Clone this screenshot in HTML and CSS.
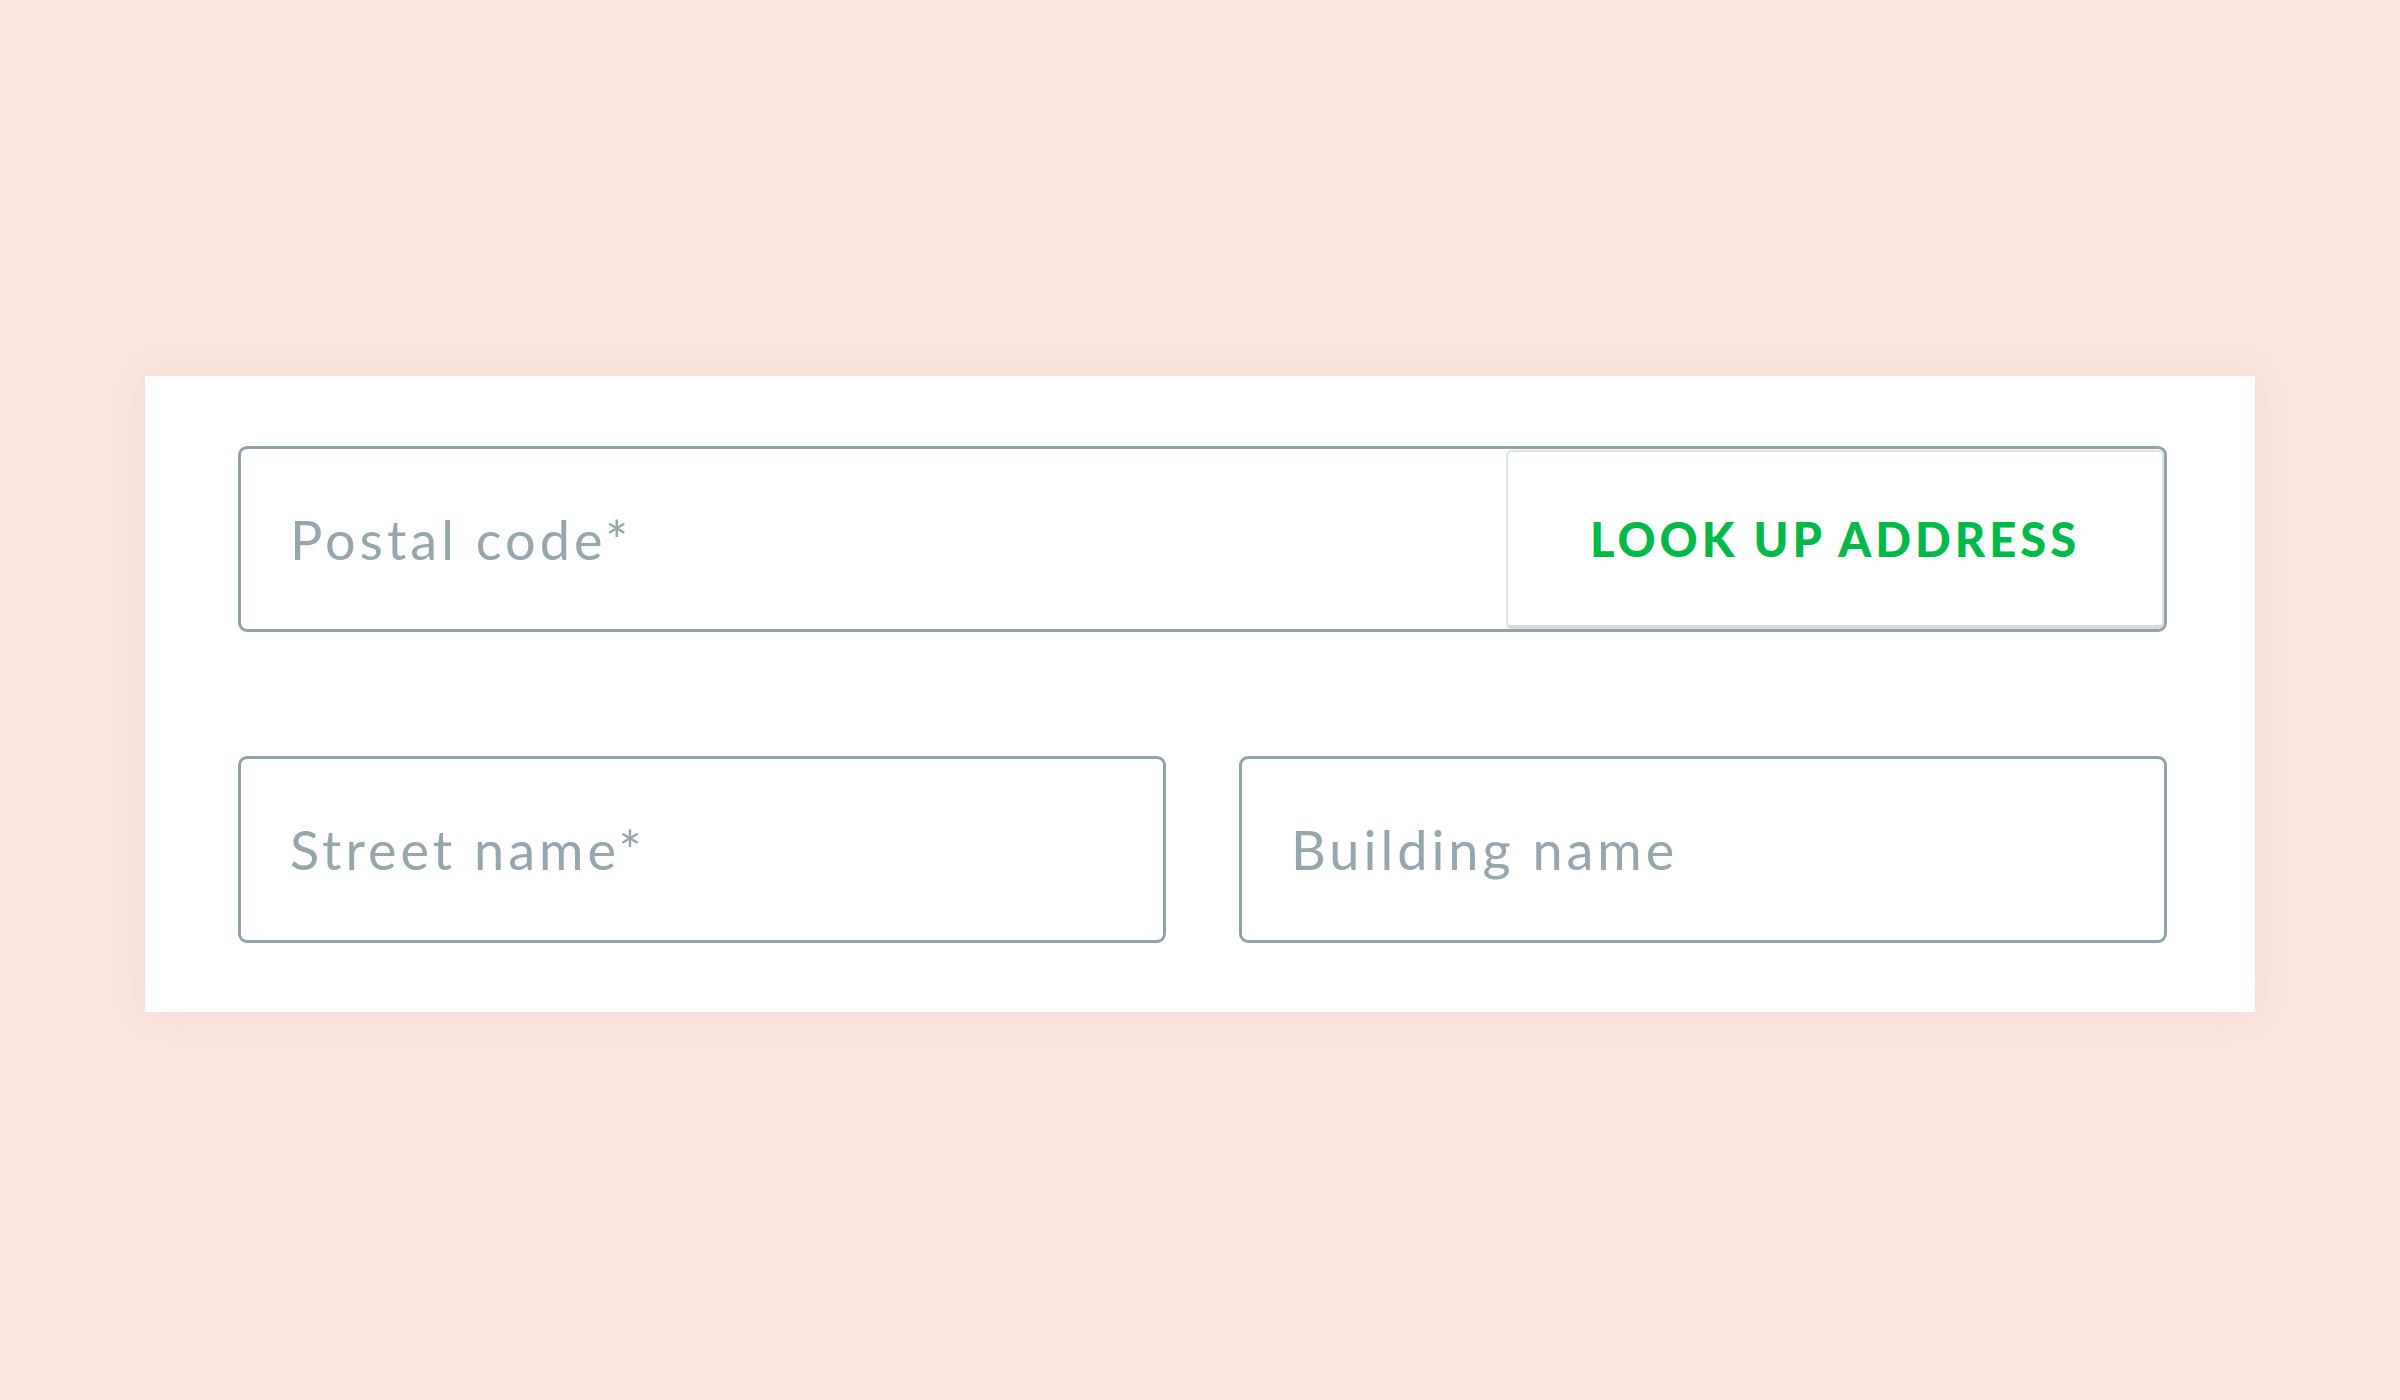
FILE: index.html
```html
<!DOCTYPE html>
<html lang="en">
<head>
<meta charset="utf-8">
<title>Address form</title>
<link rel="stylesheet" href="styles.css">
</head>
<body>
<main class="stage">
  <form class="card">
    <div class="field field-postal">
      <input class="field-input" type="text" placeholder="Postal code*">
      <button class="lookup" type="button">LOOK UP ADDRESS</button>
    </div>
    <div class="row">
      <div class="field"><input class="field-input" type="text" placeholder="Street name*"></div>
      <div class="field"><input class="field-input" type="text" placeholder="Building name"></div>
    </div>
  </form>
</main>
</body>
</html>
```

FILE: styles.css
```css
html, body {
  margin: 0;
  padding: 0;
  background: #fbe7e0;
}
body {
  width: 2400px;
  height: 1400px;
  font-family: "Lato", "Liberation Sans", sans-serif;
}
.stage {
  padding-top: 376px;
  display: flex;
  justify-content: center;
}
.card {
  width: 2110px;
  box-sizing: border-box;
  background: #ffffff;
  padding: 70px 88px 69px 93px;
  box-shadow: 0 0 40px 8px rgba(220, 170, 150, 0.18);
  display: flex;
  flex-direction: column;
  gap: 124px;
}
.row {
  display: flex;
  gap: 73px;
}
.row .field {
  flex: 1;
}
.field {
  height: 187px;
  box-sizing: border-box;
  border: 3px solid #91a2a9;
  border-radius: 9px;
  display: flex;
  align-items: stretch;
  background: #fff;
}
.field-postal {
  height: 186px;
}
.field-input {
  flex: 1;
  min-width: 0;
  border: none;
  outline: none;
  background: transparent;
  padding: 0 0 0 49px;
  font-family: "Lato", "Liberation Sans", sans-serif;
  font-size: 54px;
  letter-spacing: 4px;
  color: #4b5a60;
  border-radius: 9px;
}
.field-input::placeholder {
  color: #95a6ad;
  opacity: 1;
}
.lookup {
  width: 658px;
  margin: 1px 0 0 0;
  border: 2px solid #e1e3e3;
  border-bottom-width: 4px;
  border-bottom-color: #d6dadb;
  border-radius: 6px;
  background: #fff;
  color: #00b94a;
  font-family: "Lato", "Liberation Sans", sans-serif;
  font-weight: 900;
  font-size: 47px;
  letter-spacing: 4px;
  cursor: pointer;
  padding: 0;
}
```
